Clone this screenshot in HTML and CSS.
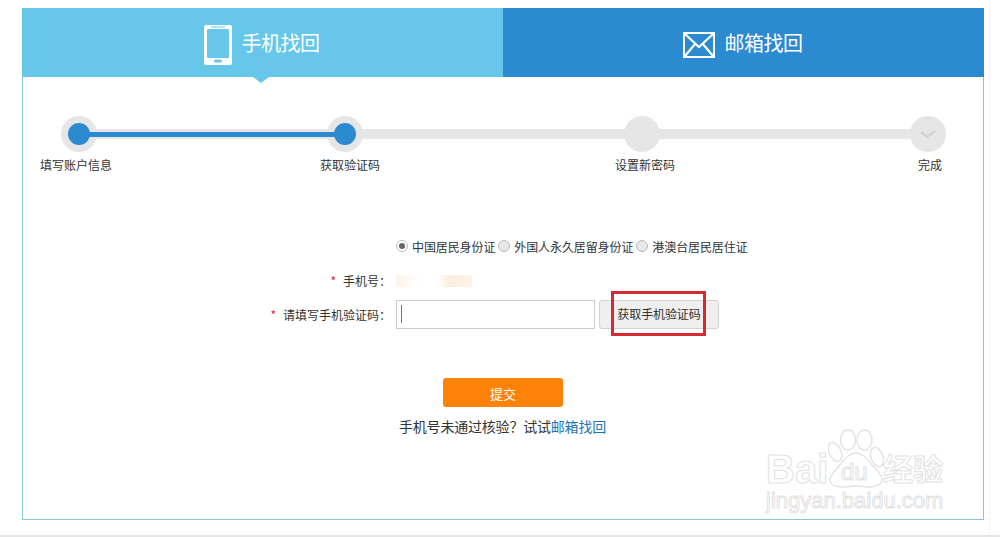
FILE: index.html
```html
<!doctype html>
<html lang="zh-CN">
<head>
    <meta charset="UTF-8" />
    <title>手机找回</title>
    <link rel="stylesheet" href="styles.css">
</head>
<body>
    <div class="panel">
        <div class="tabs">
            <div class="tab tab-active">
                <svg class="icon-phone" width="28" height="40" viewBox="0 0 28 40">
                    <path fill="#fff" fill-rule="evenodd" d="M2 0h24a2 2 0 0 1 2 2v36a2 2 0 0 1-2 2H2a2 2 0 0 1-2-2V2a2 2 0 0 1 2-2zM3 5v27a1 1 0 0 0 1 1h20a1 1 0 0 0 1-1V5a1 1 0 0 0-1-1H4a1 1 0 0 0-1 1zM7 1.500v1h14v-1zM11.500 34.500a1.500 1.500 0 0 0 0 3h5a1.500 1.500 0 0 0 0-3z"/>
                </svg>
                <span>手机找回</span>
            </div>
            <div class="tab tab-mail">
                <svg class="icon-mail" width="32" height="26" viewBox="0 0 32 26">
                    <rect x="1" y="1" width="30" height="24" fill="none" stroke="#fff" stroke-width="2"/>
                    <path d="M2 2l14 13L30 2M2 24l10.500-12.500M30 24L19.500 11.500" fill="none" stroke="#fff" stroke-width="2.200"/>
                </svg>
                <span>邮箱找回</span>
            </div>
        </div>

        <div class="content">
            <div class="steps">
                <div class="track"></div>
                <div class="track-done"></div>
                <div class="step">
                    <div class="dot"><i></i></div>
                    <p class="label-a">填写账户信息</p>
                </div>
                <div class="step step-2">
                    <div class="dot"><i></i></div>
                    <p class="label-b">获取验证码</p>
                </div>
                <div class="step step-3">
                    <div class="dot"></div>
                    <p class="label-c">设置新密码</p>
                </div>
                <div class="step step-4">
                    <div class="dot">
                        <svg width="16" height="10" viewBox="0 0 16 10"><path d="M1 3l6 5 8-6" fill="none" stroke="#cfcfcf" stroke-width="2"/></svg>
                    </div>
                    <p class="label-d">完成</p>
                </div>
            </div>

            <div class="form">
                <div class="row row-radios">
                    <div class="radios">
                        <span class="radio radio-on"></span><span class="radio-text">中国居民身份证</span>
                        <span class="radio"></span><span class="radio-text">外国人永久居留身份证</span>
                        <span class="radio"></span><span class="radio-text">港澳台居民居住证</span>
                    </div>
                </div>
                <div class="row row-phone">
                    <div class="field-label"><em>*</em>手机号：</div>
                    <div class="phone-blur"></div>
                </div>
                <div class="row row-code">
                    <div class="field-label"><em>*</em>请填写手机验证码：</div>
                    <div class="code-input"><span class="caret"></span></div>
                    <div class="code-btn">获取手机验证码<span class="red-box"></span></div>
                </div>
            </div>

            <div class="submit">提交</div>
            <p class="alt">手机号未通过核验？试试<a href="#">邮箱找回</a></p>
        </div>

        <div class="watermark">
            <svg class="paw" width="56" height="62" viewBox="0 0 56 62">
                <g fill="#fff" stroke="#e4e4e4" stroke-width="1.500">
                    <ellipse cx="7" cy="24" rx="6" ry="10" transform="rotate(-25 7 24)"/>
                    <ellipse cx="20" cy="12" rx="7.500" ry="10"/>
                    <ellipse cx="36.500" cy="12" rx="7.500" ry="10"/>
                    <ellipse cx="49" cy="29" rx="6" ry="10" transform="rotate(-20 49 29)"/>
                    <path d="M28 25c7 0 11 6 16 12 6 6 10 10 10 15 0 5-7 7-13 7-4 0-9-1-13-1s-9 1-14 1c-6 0-12-2-12-7 0-6 5-9 10-15 5-6 9-12 16-12z"/>
                </g>
            </svg>
            <span class="wm-bai">Bai</span>
            <span class="wm-du">du</span>
            <span class="wm-cn">经验</span>
            <span class="wm-url">jingyan.baidu.com</span>
        </div>
    </div>
</body>
</html>
```

FILE: styles.css
```css
body {
    font-family: "Noto Sans CJK SC", "Liberation Sans", sans-serif;
    font-size: 12px;
    color: #333;
    background: linear-gradient(90deg, #fff 989px, #f6f6f6 989px, #f6f6f6 990px, #fff 990px);
    margin: 0;
    height: 537px;
    box-sizing: border-box;
    padding: 8px 0 0 22px;
    border-bottom: 2px solid #e6e6e6;
    overflow: hidden;
}

.panel {
    position: relative;
    width: 962px;
    height: 512px;
}

.tabs {
    display: flex;
    height: 69px;
}

.tab {
    flex: 1;
    display: flex;
    align-items: center;
    justify-content: center;
    gap: 10px;
    padding-right: 2px;
    color: #fff;
    font-size: 20px;
    letter-spacing: -0.5px;
}

.tab-active {
    background-color: #67c7ea;
    position: relative;
}

.tab-active::after {
    content: "";
    position: absolute;
    left: 231px;
    top: 69px;
    border-left: 8px solid transparent;
    border-right: 8px solid transparent;
    border-top: 6px solid #67c7ea;
}

.tab-mail {
    background-color: #2b8ad0;
}

.icon-phone {
    margin-top: 4px;
}

.icon-mail {
    margin-top: 5px;
}

.content {
    height: 443px;
    box-sizing: border-box;
    border: 1px solid #86c8d8;
    border-top: none;
    padding: 39px 0 0 18px;
}

/* steps */
.steps {
    display: flex;
    position: relative;
}

.track {
    position: absolute;
    left: 38px;
    width: 849px;
    top: 13px;
    height: 10px;
    background-color: #e6e6e6;
}

.track-done {
    position: absolute;
    z-index: 1;
    left: 38px;
    width: 266px;
    top: 16px;
    height: 5px;
    background-color: #2b8ad0;
}

.step {
    position: relative;
    width: 76px;
    display: flex;
    flex-direction: column;
    align-items: center;
}

.step-2 {
    margin-left: 190px;
}

.step-3 {
    margin-left: 221px;
}

.step-4 {
    margin-left: 210px;
}

.dot {
    width: 36px;
    height: 36px;
    border-radius: 50%;
    background-color: #e6e6e6;
    display: flex;
    align-items: center;
    justify-content: center;
}

.dot i {
    width: 22px;
    height: 22px;
    border-radius: 50%;
    background-color: #2b8ad0;
}

.step p {
    margin: 5px 0 0;
    line-height: 16px;
    white-space: nowrap;
}

.label-a {
    transform: translateX(-3px);
}

.label-b {
    transform: translateX(5px);
}

.label-c {
    transform: translateX(3px);
}

.label-d {
    transform: translateX(2px);
}

/* form */
.form {
    margin: 65px 0 0 -18px;
}

.row {
    display: flex;
    align-items: center;
}

.row-radios {
    padding-left: 373px;
    height: 16px;
}

.row-phone {
    margin-top: 19px;
    height: 16px;
}

.row-code {
    margin-top: 11px;
    height: 29px;
}

.radios {
    display: flex;
    align-items: center;
    white-space: nowrap;
}

.radio {
    width: 10px;
    height: 10px;
    border: 1px solid #bbb;
    border-radius: 50%;
    background-color: #e8e8e8;
    margin-right: 4px;
    position: relative;
}

.radio-on {
    background-color: #fff;
}

.radio-on::after {
    content: "";
    position: absolute;
    left: 2px;
    top: 2px;
    width: 6px;
    height: 6px;
    border-radius: 50%;
    background-color: #666;
}

.radio-text {
    margin-right: 3px;
    letter-spacing: -0.1px;
}

.field-label {
    width: 368px;
    margin-right: 5px;
    text-align: right;
    line-height: 16px;
}

.field-label em {
    font-style: normal;
    color: #d9282f;
    margin-right: 7px;
}

.phone-blur {
    width: 76px;
    height: 12px;
    background: linear-gradient(90deg, #fdf3e8 0, #fff 30%, #fff 55%, #fdeedd 70%, #fdf3e8 100%);
}

.code-input {
    width: 199px;
    height: 29px;
    box-sizing: border-box;
    border: 1px solid #ccc;
    padding: 4px 0 0 4px;
    margin-right: 4px;
}

.caret {
    display: block;
    width: 1px;
    height: 18px;
    background-color: #777;
}

.code-btn {
    position: relative;
    width: 120px;
    height: 29px;
    box-sizing: border-box;
    border: 1px solid #d2d2d2;
    border-radius: 3px;
    background-color: #efefef;
    text-align: center;
    line-height: 25px;
    letter-spacing: -0.1px;
}

.red-box {
    position: absolute;
    left: 11px;
    top: -10px;
    width: 95px;
    height: 45px;
    box-sizing: border-box;
    border: 3px solid #d9282f;
}

.submit {
    width: 120px;
    height: 29px;
    margin: 49px 0 0 402px;
    background-color: #ff8208;
    border-radius: 3px;
    color: #fff;
    font-size: 13px;
    text-align: center;
    line-height: 31px;
}

.alt {
    margin: 9px 0 0 358px;
    font-size: 14px;
    line-height: 20px;
    letter-spacing: -0.2px;
}

.alt a {
    color: #1c75b8;
    text-decoration: none;
}

/* watermark */
.watermark {
    position: absolute;
    left: 740px;
    top: 415px;
    width: 190px;
    height: 95px;
    color: #fff;
    -webkit-text-stroke: 1px #e2e2e2;
    font-family: "Liberation Sans", sans-serif;
}

.paw {
    position: absolute;
    left: 66px;
    top: 5px;
}

.wm-bai {
    position: absolute;
    left: 4px;
    top: 23px;
    font-size: 40px;
    line-height: 46px;
    font-weight: bold;
}

.wm-du {
    position: absolute;
    left: 79px;
    top: 36px;
    font-size: 24px;
    line-height: 26px;
}

.wm-cn {
    position: absolute;
    left: 121px;
    top: 24px;
    font-family: "Noto Sans CJK SC", sans-serif;
    font-size: 30px;
    line-height: 40px;
    font-weight: bold;
}

.wm-url {
    position: absolute;
    left: 4px;
    top: 66px;
    font-size: 22px;
    line-height: 24px;
    white-space: nowrap;
}
```
